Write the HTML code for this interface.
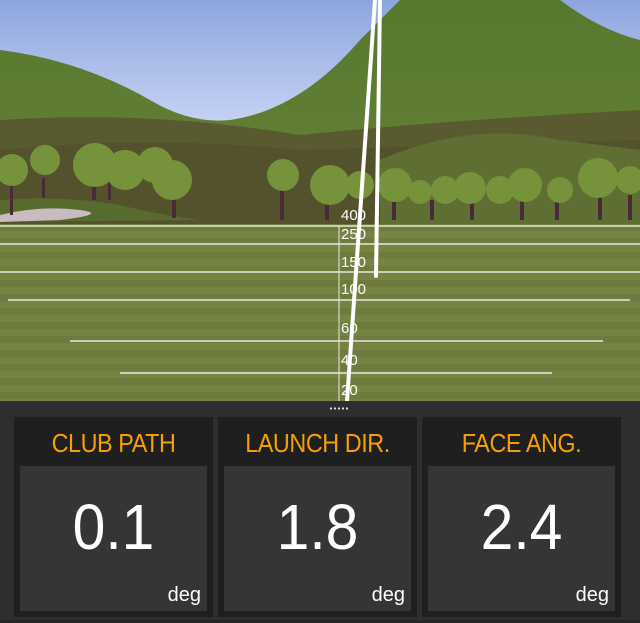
<!DOCTYPE html>
<html><head><style>
body{margin:0;width:640px;height:623px;overflow:hidden;background:#2e2e30;font-family:"Liberation Sans",sans-serif}
.scene{position:absolute;left:0;top:0;width:640px;height:401px}
.panel{position:absolute;left:0;top:401px;width:640px;height:222px;background:#2e2e30}
.card{position:absolute;top:16px;width:199px;height:200px;background:#1f1f1f}
.card .t{position:absolute;top:13px;left:0;right:0;text-align:center;color:#f5a000;font-size:26px;line-height:27px;letter-spacing:-0.5px;transform:scaleX(0.9)}
.card .b{position:absolute;left:6px;right:6px;top:49px;bottom:6px;background:#353535}
.card .v{position:absolute;top:29px;left:0;right:0;text-align:center;color:#fff;font-size:64px;line-height:65px;transform:scaleX(0.92)}
.card .u{position:absolute;right:6px;bottom:4px;color:#fff;font-size:20px}
.dots{position:absolute;left:329px;top:6px;width:20px;height:3px;background:radial-gradient(circle,#ddd 1px,transparent 1.3px) 0 0/4px 3px repeat-x}
.bot{position:absolute;left:0;top:219px;width:640px;height:3px;background:#262626}
</style></head><body>
<svg class="scene" width="640" height="401" viewBox="0 0 640 401">
<defs>
<linearGradient id="sky" x1="0" y1="0" x2="0" y2="1"><stop offset="0" stop-color="#8ea6de"/><stop offset="1" stop-color="#cdd8f6"/></linearGradient>
<pattern id="str" width="640" height="14" patternUnits="userSpaceOnUse"><rect width="640" height="14" fill="#6e7b3d"/><rect y="7" width="640" height="7" fill="#758343"/></pattern>
<linearGradient id="hl" x1="0" y1="0" x2="0" y2="1"><stop offset="0" stop-color="#56792f"/><stop offset="1" stop-color="#6a8038"/></linearGradient>
</defs>
<rect width="640" height="140" fill="url(#sky)"/>
<path d="M0 50 Q80 60 150 100 Q190 124 230 120 Q300 110 360 40 L400 0 L560 0 Q600 30 640 40 L640 230 L0 230Z" fill="url(#hl)"/>
<path d="M0 120 Q150 110 300 135 Q450 120 640 110 L640 230 L0 230Z" fill="#5a5a30"/>
<path d="M0 150 Q150 135 300 150 L640 140 L640 230 L0 230Z" fill="#4e4c2a" opacity="0.6"/>
<path d="M380 160 Q470 120 560 140 L640 150 L640 230 L380 230Z" fill="#5f6e32"/>
<path d="M0 200 Q60 195 120 205 Q160 215 200 220 L0 222Z" fill="#586b2e"/>
<path d="M0 215 Q40 205 80 210 Q110 214 60 220 L0 222Z" fill="#c8bcc0"/>
<g fill="#4a2a35">
<rect x="10" y="185" width="3" height="30"/><rect x="42" y="178" width="3" height="20"/><rect x="92" y="180" width="4" height="20"/><rect x="108" y="180" width="3" height="20"/><rect x="172" y="195" width="4" height="23"/><rect x="280" y="190" width="4" height="30"/><rect x="325" y="195" width="4" height="25"/><rect x="392" y="195" width="4" height="25"/><rect x="430" y="200" width="4" height="20"/><rect x="470" y="200" width="4" height="20"/><rect x="520" y="195" width="4" height="25"/><rect x="555" y="200" width="4" height="20"/><rect x="598" y="195" width="4" height="25"/><rect x="628" y="195" width="4" height="25"/>
</g>
<g fill="#76933c">
<circle cx="12" cy="170" r="16"/><circle cx="45" cy="160" r="15"/><circle cx="95" cy="165" r="22"/><circle cx="125" cy="170" r="20"/><circle cx="155" cy="165" r="18"/><circle cx="172" cy="180" r="20"/><circle cx="283" cy="175" r="16"/><circle cx="330" cy="185" r="20"/><circle cx="360" cy="185" r="14"/><circle cx="395" cy="185" r="17"/><circle cx="420" cy="192" r="12"/><circle cx="445" cy="190" r="14"/><circle cx="470" cy="188" r="16"/><circle cx="500" cy="190" r="14"/><circle cx="525" cy="185" r="17"/><circle cx="560" cy="190" r="13"/><circle cx="598" cy="178" r="20"/><circle cx="630" cy="180" r="14"/>
</g>
<rect y="224" width="640" height="177" fill="url(#str)"/>
<g stroke="#e8e8e0" stroke-width="1.5">
<line x1="0" y1="226" x2="640" y2="226"/><line x1="0" y1="244" x2="640" y2="244"/><line x1="0" y1="272" x2="640" y2="272"/><line x1="8" y1="300" x2="630" y2="300"/><line x1="70" y1="341" x2="603" y2="341"/><line x1="120" y1="373" x2="552" y2="373"/>
<line x1="339" y1="226" x2="339" y2="401" stroke-width="1"/>
</g>
<g fill="#fff" font-size="15" font-family="Liberation Sans">
<text x="341" y="220">400</text><text x="341" y="239">250</text><text x="341" y="267">150</text><text x="341" y="294">100</text><text x="341" y="333">60</text><text x="341" y="365">40</text><text x="341" y="395">20</text>
</g>
<g stroke="#fff" stroke-width="4" stroke-linecap="round" fill="none">
<line x1="347" y1="401" x2="375" y2="0"/><line x1="380" y1="0" x2="376" y2="276"/>
</g>
</svg>
<div class="panel">
<div class="dots"></div>
<div class="card" style="left:14px"><div class="t">CLUB PATH</div><div class="b"><div class="v">0.1</div><div class="u">deg</div></div></div>
<div class="card" style="left:218px"><div class="t">LAUNCH DIR.</div><div class="b"><div class="v">1.8</div><div class="u">deg</div></div></div>
<div class="card" style="left:422px"><div class="t">FACE ANG.</div><div class="b"><div class="v">2.4</div><div class="u">deg</div></div></div>
<div class="bot"></div>
</div>
</body></html>
